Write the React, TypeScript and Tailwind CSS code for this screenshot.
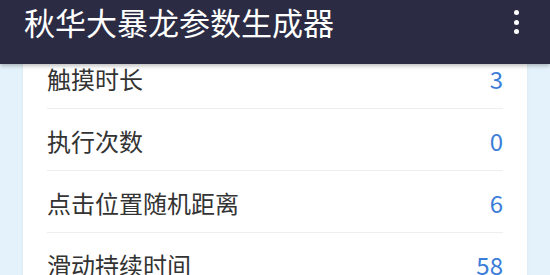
const rows = [
  { label: "触摸时长", value: "3" },
  { label: "执行次数", value: "0" },
  { label: "点击位置随机距离", value: "6" },
  { label: "滑动持续时间", value: "58" },
  { label: "滑动随机偏移", value: "12" },
];

export default function App() {
  return (
    <div
      className="flex h-[275px] w-[550px] flex-col overflow-hidden bg-[#e4f3fb]"
      style={{ fontFamily: '"Noto Sans CJK SC", "Noto Sans", sans-serif' }}
    >
      <header className="relative z-10 flex h-16 shrink-0 items-start justify-between bg-[#2b2c44] pl-[24px] pr-[31px] shadow-[0_2px_4px_rgba(0,0,0,0.25)]">
        <h1 className="text-[31px] leading-[44px] text-white">秋华大暴龙参数生成器</h1>
        <div className="mt-[10px] flex flex-col gap-[4.5px]">
          <span className="h-[5px] w-[5px] rounded-full bg-white" />
          <span className="h-[5px] w-[5px] rounded-full bg-white" />
          <span className="h-[5px] w-[5px] rounded-full bg-white" />
        </div>
      </header>
      <main className="flex-1 overflow-hidden px-[23px]">
        <div className="-mt-[17px] bg-white shadow-[0_0_3px_rgba(0,0,0,0.06)]">
          {rows.map((r) => (
            <div
              key={r.label}
              className="mx-6 flex h-[62px] items-center justify-between border-b border-[#eeeeee] pt-[3px]"
            >
              <span className="text-[24px] text-[#333333]">{r.label}</span>
              <span className="text-[24px] text-[#3b7dd8]">{r.value}</span>
            </div>
          ))}
        </div>
      </main>
    </div>
  );
}
